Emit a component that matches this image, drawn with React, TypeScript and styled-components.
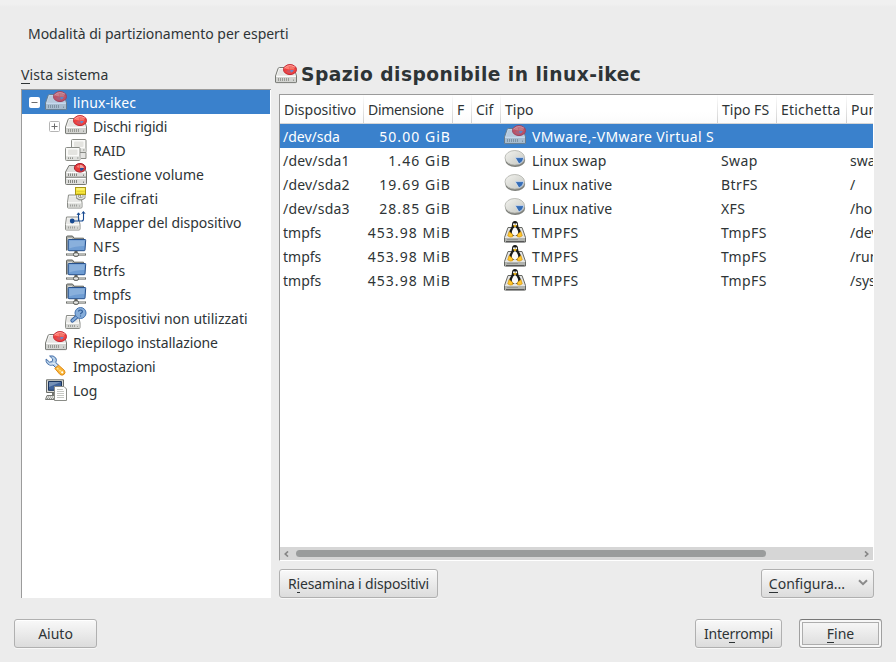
import React from "react";
import styled, { createGlobalStyle, css } from "styled-components";

const GlobalStyle = createGlobalStyle`
  * { box-sizing: border-box; }
  html, body { margin: 0; padding: 0; }
  body {
    background: #ececec;
    color: #2e3436;
    font: 14px/24px "Noto Sans", "Open Sans", sans-serif;
    overflow: hidden;
  }
`;

const Window = styled.main`
  width: 896px;
  height: 662px;
  display: flex;
  flex-direction: column;
  background: linear-gradient(#f0f0f0 0, #f0f0f0 4px, #ececec 7px);
  white-space: nowrap;
`;

const Title = styled.h1<{ $spacing: number }>`
  margin: 0;
  padding: 22px 0 0 28px;
  height: 63px;
  font: inherit;
  letter-spacing: ${(p) => p.$spacing}px;
`;

const Content = styled.div`
  display: flex;
  gap: 8px;
  height: 535px;
  padding-left: 21px;
`;

const Sidebar = styled.section`
  width: 250px;
  display: flex;
  flex-direction: column;
`;

const SidebarLabel = styled.div`
  height: 26px;
`;

const Text = styled.span<{ $spacing?: number }>`
  letter-spacing: ${(p) => p.$spacing ?? 0}px;
`;

const Mnemonic = styled.span`
  display: inline-block;
  line-height: 16px;
  height: 17px;
  border-bottom: 1px solid #2e3436;
`;

const Tree = styled.div`
  height: 509px;
  background: #fff;
  border: solid #9b9b9b;
  border-width: 1px 0 0 1px;
`;

const TreeRow = styled.div<{ $depth: number; $selected?: boolean }>`
  display: flex;
  align-items: center;
  height: 24px;
  padding-left: ${(p) => 3 + p.$depth * 20}px;
  margin-right: 1px;
  ${(p) =>
    p.$selected &&
    css`
      background: #3a81cc;
      color: #fff;
    `}
`;

const Expander = styled.span`
  width: 20px;
  height: 24px;
  flex: none;
  display: flex;
  align-items: center;
  padding: 1px 0 0 4px;
`;

const IconSlot = styled.span<{ $selected?: boolean }>`
  width: 22px;
  height: 22px;
  flex: none;
  margin-right: 6px;
  display: flex;
  ${(p) =>
    p.$selected &&
    css`
      filter: opacity(0.72);
    `}
`;

const TreeText = styled(Text)`
  position: relative;
  top: 1px;
`;

const Main = styled.section`
  width: 595px;
  display: flex;
  flex-direction: column;
`;

const Heading = styled.h2`
  display: flex;
  align-items: center;
  margin: 0 0 0 -4px;
  padding-bottom: 7px;
  height: 31px;
  font: bold 18.67px/24px "DejaVu Sans", sans-serif;
  letter-spacing: 0.47px;
  ${IconSlot} { margin-right: 4px; }
`;

const TableFrame = styled.div`
  height: 467px;
  flex: none;
  display: flex;
  flex-direction: column;
  background: #fff;
  border: solid #9b9b9b;
  border-width: 1px 0 0 1px;
  border-bottom: 1px solid #fff;
  border-right: 1px solid #fff;
  overflow: hidden;
`;

const columns = css`
  display: grid;
  grid-template-columns: 84px 89px 19px 29px 217px 59px 70px 26px;
`;

const HeaderRow = styled.div`
  ${columns}
  height: 29px;
  background: linear-gradient(#fff 60%, #fbfbfb);
  border-bottom: 1px solid #d5d5d5;
`;

const HeaderCell = styled.div`
  padding-left: 4px;
  line-height: 30px;
  overflow: hidden;
  border-right: 1px solid;
  border-image: linear-gradient(#fff, #cfcfcf) 1;
  &:last-child { border: 0; }
`;

const Row = styled.div<{ $selected?: boolean }>`
  ${columns}
  height: 24px;
  ${(p) =>
    p.$selected &&
    css`
      background: #3a81cc;
      color: #fff;
    `}
`;

const Cell = styled.div<{ $right?: boolean }>`
  display: flex;
  align-items: center;
  justify-content: ${(p) => (p.$right ? "flex-end" : "flex-start")};
  padding: ${(p) => (p.$right ? "0 2px 0 0" : "0 0 0 3px")};
  overflow: hidden;
`;

const CellText = styled(Text)`
  position: relative;
  top: 1px;
`;

const ScrollBar = styled.div`
  display: flex;
  align-items: center;
  gap: 7px;
  height: 13px;
  margin-top: auto;
  padding: 0 4px;
  background: #d6d6d6;
`;

const Thumb = styled.div`
  width: 470px;
  height: 7px;
  border-radius: 4px;
  background: #9a9c9c;
  margin-right: auto;
`;

const Actions = styled.div`
  display: flex;
  justify-content: space-between;
  margin-top: 8px;
`;

const Button = styled.button<{ $width: number; $focus?: boolean }>`
  width: ${(p) => p.$width}px;
  height: 29px;
  display: flex;
  align-items: center;
  justify-content: center;
  padding: 1px 0 0;
  font: inherit;
  color: inherit;
  border: 1px solid #b0b0b0;
  border-radius: 3px;
  background: linear-gradient(#f9f9f9, #dcdcdc);
  box-shadow: 0 1px 0 #f8f8f8, inset 0 1px 0 #fff;
  ${(p) =>
    p.$focus &&
    css`
      border-color: #a0a0a0;
      border-top-color: #777;
      box-shadow: 0 1px 0 #f8f8f8, inset 0 0 0 2px #f7f7f7, inset 0 0 0 3px #adadad;
    `}
`;

const MenuArrow = styled.svg`
  margin: 0 -2px 2px 13px;
`;

const Footer = styled.footer`
  display: flex;
  padding: 21px 14px 0;
  gap: 17px;
`;

const Spacer = styled.div`
  flex: 1;
`;

type IconName =
  | "disk" | "raid" | "volume" | "crypt" | "mapper"
  | "net" | "unused" | "tools" | "log" | "pie" | "tux";

function DiskBody() {
  return (
    <g>
      <path d="M4.4 3.5H17.8Q19 3.5 19.4 4.7L21.5 12V18Q21.5 18.6 20.9 18.6H1.1Q.5 18.6 .5 18V12L3 4.7Q3.4 3.5 4.4 3.5Z" fill="#f6f6f4" stroke="#777974" />
      <path d="M4.5 5H17.5L20 11.8H2Z" fill="#e5e5e3" />
      <path d="M1 12.5H21V18H1Z" fill="#d2d3d0" />
      <path d="M1.2 12.4H20.8" stroke="#fff" />
      <path d="M3.5 14V17M5.5 14V17M7.5 14V17M9.5 14V17M11.5 14V17M13.5 14V17M18.5 15.5V17" stroke="#999b96" />
    </g>
  );
}

function RedPie() {
  return (
    <g>
      <ellipse cx="15" cy="5.6" rx="6.5" ry="5" fill="#f0403e" stroke="#c02a36" />
      <path d="M9.4 4.4Q14 -.7 19.8 3.2" fill="none" stroke="#ff9b94" strokeWidth="1.2" />
      <path d="M14.5 5.5V2Q18.8 2 19.6 5.5Z" fill="#f2776b" />
      <path d="M15 6H18.8Q18.4 8.2 15.8 8.8Z" fill="#6f86c4" />
      <path d="M14.4 5.5L15.6 9.2Q12 9.2 11 7Z" fill="#cf5361" />
      <path d="M14.3 5.5V2.3Q11.5 2.6 10.5 4.8" fill="#ff7b70" />
    </g>
  );
}

function SmallDrive({ x, y }: { x: number; y: number }) {
  return (
    <g transform={`translate(${x} ${y})`}>
      <path d="M1.5 .5H13.5L15 8V12.5Q15 13.5 14 13.5H1.3Q.5 13.5 .5 12.5V8Z" fill="#f8f8f6" stroke="#8a8c87" />
      <path d="M2.4 2H12.6L13.5 7.5H1.8Z" fill="#e7e7e5" />
      <path d="M1 9H14.5V13H1Z" fill="#d5d6d3" />
      <path d="M3.5 10V12M5.5 10V12M7.5 10V12M9.5 10V12M12.5 11V12" stroke="#9fa19c" />
    </g>
  );
}

function RaidDrive({ x, y }: { x: number; y: number }) {
  return (
    <g transform={`translate(${x} ${y})`}>
      <rect x=".5" y=".5" width="14.5" height="13" rx="1" fill="#fafaf8" stroke="#8a8c87" />
      <rect x="3" y="2.5" width="9.5" height="5.5" rx="1" fill="#e4e4e0" />
      <path d="M1 9.3H14.5V13H1Z" fill="#dfe0dd" />
      <path d="M3.5 10.3V12M5.5 10.3V12M7.5 10.3V12M12 11H13.5" stroke="#92948f" />
    </g>
  );
}

function Icon({ name }: { name: IconName }) {
  return (
    <svg width="22" height="22" viewBox="0 0 22 22" fill="none" overflow="visible">
      {name === "disk" && (<><DiskBody /><RedPie /></>)}
      {name === "raid" && (<><RaidDrive x={6} y={0} /><path d="M16 13.5H21V19.5H16" fill="#e5e5e3" stroke="#8a8c87" /><RaidDrive x={0} y={8} /></>)}
      {name === "volume" && (
        <g>
          <path d="M4 2.5H18L21.5 9V20.5Q21.5 21.5 20.5 21.5H1.5Q.5 21.5 .5 20.5V9Z" fill="#dededc" stroke="#777974" />
          <path d="M1 14.2H21" stroke="#777974" />
          <path d="M1.5 9.5H20.5M1.5 15.5H20.5" stroke="#fff" />
          <path d="M3.5 10.5V13M5.5 10.5V13M7.5 10.5V13M9.5 10.5V13M11.5 10.5V13M3.5 17V20M5.5 17V20M7.5 17V20M9.5 17V20M11.5 17V20M18.5 11.5V13M18.5 18.5V20" stroke="#858782" />
          <ellipse cx="15" cy="4.8" rx="5.6" ry="4.3" fill="#e53b3b" stroke="#a51d2d" />
          <path d="M15 5V1.8Q18.5 2 19 5Z" fill="#f0a49d" />
          <path d="M15 5H19Q18 8 15.5 8Z" fill="#234e9e" />
          <path d="M11.5 4Q12.5 2 14.5 2V5Z" fill="#f3837b" />
        </g>
      )}
      {name === "crypt" && (
        <g>
          <g transform="translate(2 7.5)"><SmallDrive x={0} y={0} /></g>
          <path d="M12.5 8V10.5Q16 13.5 19 10.5V8" stroke="#8d908a" strokeWidth="3" />
          <path d="M12.5 8V10.3Q16 13 19 10.3V8" stroke="#e4e5e0" strokeWidth="1.4" />
          <rect x="10.5" y=".5" width="10" height="7" fill="#f7e83d" stroke="#a99716" />
          <path d="M11.5 2H19.5" stroke="#fffbb5" />
          <path d="M11.5 4.5H19.5M11.5 6.5H19.5" stroke="#e5d333" />
        </g>
      )}
      {name === "mapper" && (
        <g>
          <SmallDrive x={0} y={5.5} />
          <circle cx="7.2" cy="10" r="2.4" fill="#174a91" />
          <path d="M7 10H16.5Q18.5 10 18.5 8V1M13.5 10V2" stroke="#174a91" strokeWidth="1.1" />
          <path d="M12 4L13.5 1.8L15 4M16.9 2.8L18.4 .5L20 2.8" stroke="#174a91" />
        </g>
      )}
      {name === "net" && (
        <g>
          <path d="M1.5 15.5V2Q1.5 1 2.5 1H7.5L9 3.2H18.5V14" fill="#adafaa" stroke="#62645f" />
          <path d="M3 3.5H7M3 5.5H10" stroke="#d7d8d5" />
          <path d="M3.7 4.5H20.2Q20.8 4.5 20.7 5.3L20 15Q20 15.7 19.2 15.7H4Q3.2 15.7 3.2 14.8L3.2 5.3Q3.2 4.5 3.7 4.5Z" fill="#6f9dd3" stroke="#28528d" />
          <path d="M4.2 5.4H19.7L19.2 11Q10 11 4.2 13.5Z" fill="#9bbde2" opacity=".6" />
          <path d="M1 19.5H21" stroke="#6d6f6b" strokeWidth="2.2" />
          <path d="M2 19.2H20" stroke="#d8dad5" />
          <path d="M11 16V18" stroke="#60625e" strokeWidth="3" />
          <rect x="8.5" y="17.8" width="5" height="3.5" rx="1.5" fill="#e6e7e4" stroke="#50524e" />
        </g>
      )}
      {name === "unused" && (
        <g>
          <SmallDrive x={0} y={8} />
          <path d="M11.5 10L7.4 13.6" stroke="#345f9e" strokeWidth="4" strokeLinecap="round" />
          <path d="M11.5 10L7.4 13.6" stroke="#83abd9" strokeWidth="2.2" strokeLinecap="round" />
          <circle cx="15.5" cy="6" r="5.5" fill="#86add9" stroke="#4474b2" />
          <path d="M13.5 4.5Q13.7 3 15.4 3Q17.4 3 17.4 4.5Q17.4 5.5 16.4 6Q15.5 6.4 15.5 7.3M15.5 8.4V9.5" stroke="#2d5a96" strokeWidth="1.2" />
        </g>
      )}
      {name === "tools" && (
        <g>
          <path d="M4.6 1Q8.5 0 10.8 3Q12 5 10.8 7.5L14 10.7L11.2 13.2L8 10Q4.8 11 2.5 8.8Q.6 6.8 1.1 4L4.5 7.1L7.2 6.6L7.7 4Z" fill="#b7d0e8" stroke="#426da8" />
          <path d="M4.4 9Q7 9.4 9.4 8.2L12 10.8" stroke="#e8f1fa" />
          <path d="M9.8 13.4L13.6 10.2L19.5 15.5Q20.8 18 19 19.4Q17.2 20.8 15 19.5Z" fill="#f9b53b" stroke="#e08a14" />
          <path d="M12 13L18 18.2" stroke="#ffe28b" strokeWidth="1.5" strokeDasharray="2 1" />
          <circle cx="17.2" cy="17.3" r="1" fill="#fff" />
        </g>
      )}
      {name === "log" && (
        <g>
          <path d="M1.5 .8H18.5V13.5H1.5Z" fill="#d9dad6" stroke="#6c6e69" />
          <path d="M3.5 2.5H16.5V11.3H3.5Z" fill="#3f629a" stroke="#1b355d" />
          <path d="M4 3H16L4 8Z" fill="#7691b6" />
          <path d="M7 14H12V16H7Z" fill="#747671" />
          <path d="M2 16.5H15L17 20.5H.5Z" fill="#e1e2df" stroke="#777974" />
          <path d="M3 18H11M2 19.5H11" stroke="#90928d" strokeDasharray="1 1" />
          <path d="M9.5 7.5H19L21.5 10V21.5H9.5Z" fill="#fff" stroke="#8a8c87" />
          <path d="M12 10.5H18M12 12.5H19M12 14.5H19M12 16.5H19M12 18.5H19" stroke="#c6c8c3" />
        </g>
      )}
      {name === "pie" && (
        <g>
          <defs>
            <linearGradient id="pieTop" x1="0" y1="0" x2="1" y2="1">
              <stop offset="0" stopColor="#f3f3ef" />
              <stop offset="1" stopColor="#c4c6c0" />
            </linearGradient>
          </defs>
          <ellipse cx="11.2" cy="11" rx="10" ry="7" fill="#7e807b" />
          <ellipse cx="10.8" cy="8.8" rx="9.8" ry="7.3" fill="url(#pieTop)" stroke="#aeb0aa" strokeWidth=".8" />
          <path d="M11.2 8.6H19.8Q19.6 12.8 15 15Z" fill="#346db7" stroke="#dfe7f2" strokeWidth=".7" />
        </g>
      )}
      {name === "tux" && (
        <g>
          <path d="M4 6.5H18L21.5 16.5V21H.5V16.5Z" fill="#e6e6e4" stroke="#656762" />
          <path d="M1 17H21V20.5H1Z" fill="#b1b3af" />
          <path d="M2 20.7H20.5" stroke="#444" />
          <path d="M3.5 18.5H14" stroke="#777974" strokeDasharray="1 1" />
          <path d="M11 0Q14 0 14 3.5Q14 5.5 15.7 8Q18.3 12 15.8 15H6.2Q3.7 12 6.5 8Q8 5.5 8 3.5Q8 0 11 0Z" fill="#171918" />
          <path d="M11 6Q13 7 14 10Q15 14 11 15Q7 14 8 10Q9 7 11 6Z" fill="#fafafa" />
          <circle cx="10" cy="3.2" r="1" fill="#fff" /><circle cx="12.2" cy="3.2" r="1" fill="#fff" />
          <path d="M9 4.8L11 3.8L13 4.8L11 6.2Z" fill="#f5ba19" />
          <path d="M5 10.5L8.8 13.5L8.6 15.8Q5.8 16.8 3.7 14.8Z" fill="#ffc52b" stroke="#c98c08" strokeWidth=".6" />
          <path d="M17 10.5L13.2 13.5L13.4 15.8Q16.2 16.8 18.3 14.8Z" fill="#ffc52b" stroke="#c98c08" strokeWidth=".6" />
        </g>
      )}
    </svg>
  );
}

function ExpanderBox({ open }: { open: boolean }) {
  return (
    <svg width="11" height="11" viewBox="0 0 11 11" fill="none">
      <rect x=".5" y=".5" width="10" height="10" rx="1" fill="#fff" stroke={open ? "#fff" : "#b5b5b5"} />
      <path d={open ? "M2.5 5.5H8.5" : "M2.5 5.5H8.5M5.5 2.5V8.5"} stroke="#6d6d6d" />
    </svg>
  );
}

interface TreeItem {
  text: string;
  icon: IconName;
  depth: number;
  spacing?: number;
  expander?: "open" | "closed";
}

const tree: TreeItem[] = [
  { text: "linux-ikec", icon: "disk", depth: 0, spacing: 0.1, expander: "open" },
  { text: "Dischi rigidi", icon: "disk", depth: 1, spacing: -0.22, expander: "closed" },
  { text: "RAID", icon: "raid", depth: 1 },
  { text: "Gestione volume", icon: "volume", depth: 1 },
  { text: "File cifrati", icon: "crypt", depth: 1, spacing: 0.18 },
  { text: "Mapper del dispositivo", icon: "mapper", depth: 1, spacing: -0.04 },
  { text: "NFS", icon: "net", depth: 1, spacing: 0.5 },
  { text: "Btrfs", icon: "net", depth: 1, spacing: 0.2 },
  { text: "tmpfs", icon: "net", depth: 1 },
  { text: "Dispositivi non utilizzati", icon: "unused", depth: 1 },
  { text: "Riepilogo installazione", icon: "disk", depth: 0, spacing: -0.11 },
  { text: "Impostazioni", icon: "tools", depth: 0, spacing: -0.25 },
  { text: "Log", icon: "log", depth: 0 },
];

const headers: { text: string; spacing?: number }[] = [
  { text: "Dispositivo" },
  { text: "Dimensione", spacing: -0.3 },
  { text: "F" },
  { text: "Cif" },
  { text: "Tipo" },
  { text: "Tipo FS" },
  { text: "Etichetta", spacing: 0.2 },
  { text: "Punto di mount", spacing: 0.2 },
];

const devices: { device: string; size: string; icon: IconName; type: string; typeSpacing: number; fs: string; mount: string }[] = [
  { device: "/dev/sda", size: "50.00 GiB", icon: "disk", type: "VMware,-VMware Virtual S", typeSpacing: 0.38, fs: "", mount: "" },
  { device: "/dev/sda1", size: "1.46 GiB", icon: "pie", type: "Linux swap", typeSpacing: 0.1, fs: "Swap", mount: "swap" },
  { device: "/dev/sda2", size: "19.69 GiB", icon: "pie", type: "Linux native", typeSpacing: 0.05, fs: "BtrFS", mount: "/" },
  { device: "/dev/sda3", size: "28.85 GiB", icon: "pie", type: "Linux native", typeSpacing: 0.05, fs: "XFS", mount: "/home" },
  { device: "tmpfs", size: "453.98 MiB", icon: "tux", type: "TMPFS", typeSpacing: 0.6, fs: "TmpFS", mount: "/dev/shm" },
  { device: "tmpfs", size: "453.98 MiB", icon: "tux", type: "TMPFS", typeSpacing: 0.6, fs: "TmpFS", mount: "/run" },
  { device: "tmpfs", size: "453.98 MiB", icon: "tux", type: "TMPFS", typeSpacing: 0.6, fs: "TmpFS", mount: "/sys/fs" },
];

export default function App() {
  return (
    <Window>
      <GlobalStyle />
      <Title $spacing={-0.03}>Modalità di partizionamento per esperti</Title>
      <Content>
        <Sidebar>
          <SidebarLabel><Text $spacing={0.1}><Mnemonic>V</Mnemonic>ista sistema</Text></SidebarLabel>
          <Tree>
            {tree.map((item, i) => (
              <TreeRow key={item.text} $depth={item.depth} $selected={i === 0}>
                <Expander>{item.expander && <ExpanderBox open={item.expander === "open"} />}</Expander>
                <IconSlot $selected={i === 0}><Icon name={item.icon} /></IconSlot>
                <TreeText $spacing={item.spacing}>{item.text}</TreeText>
              </TreeRow>
            ))}
          </Tree>
        </Sidebar>
        <Main>
          <Heading><IconSlot><Icon name="disk" /></IconSlot>Spazio disponibile in linux-ikec</Heading>
          <TableFrame>
            <HeaderRow>
              {headers.map((h) => (
                <HeaderCell key={h.text}><Text $spacing={h.spacing}>{h.text}</Text></HeaderCell>
              ))}
            </HeaderRow>
            {devices.map((d, i) => (
              <Row key={i} $selected={i === 0}>
                <Cell><CellText $spacing={i > 0 && i < 4 ? 0.2 : 0}>{d.device}</CellText></Cell>
                <Cell $right><CellText $spacing={1.05}>{d.size}</CellText></Cell>
                <Cell />
                <Cell />
                <Cell><IconSlot $selected={i === 0}><Icon name={d.icon} /></IconSlot><CellText $spacing={d.typeSpacing}>{d.type}</CellText></Cell>
                <Cell><CellText $spacing={0.4}>{d.fs}</CellText></Cell>
                <Cell />
                <Cell><CellText>{d.mount}</CellText></Cell>
              </Row>
            ))}
            <ScrollBar>
              <svg width="5" height="6" viewBox="0 0 5 6" fill="none"><path d="M4 .5L1.3 3L4 5.5" stroke="#858585" strokeWidth="1.7" /></svg>
              <Thumb />
              <svg width="5" height="6" viewBox="0 0 5 6" fill="none"><path d="M1 .5L3.7 3L1 5.5" stroke="#858585" strokeWidth="1.7" /></svg>
            </ScrollBar>
          </TableFrame>
          <Actions>
            <Button $width={159}><Text $spacing={-0.16}>R<Mnemonic>i</Mnemonic>esamina i dispositivi</Text></Button>
            <Button $width={113}>
              <Text><Mnemonic>C</Mnemonic>onfigura...</Text>
              <MenuArrow width="10" height="8" viewBox="0 0 10 8" fill="none"><path d="M1 1.2L5 5.2L9 1.2" stroke="#8b8b8b" strokeWidth="2" /></MenuArrow>
            </Button>
          </Actions>
        </Main>
      </Content>
      <Footer>
        <Button $width={83}><Text>Aiuto</Text></Button>
        <Spacer />
        <Button $width={87}><Text $spacing={-0.25}>Inte<Mnemonic>r</Mnemonic>rompi</Text></Button>
        <Button $width={83} $focus><Text><Mnemonic>F</Mnemonic>ine</Text></Button>
      </Footer>
    </Window>
  );
}
